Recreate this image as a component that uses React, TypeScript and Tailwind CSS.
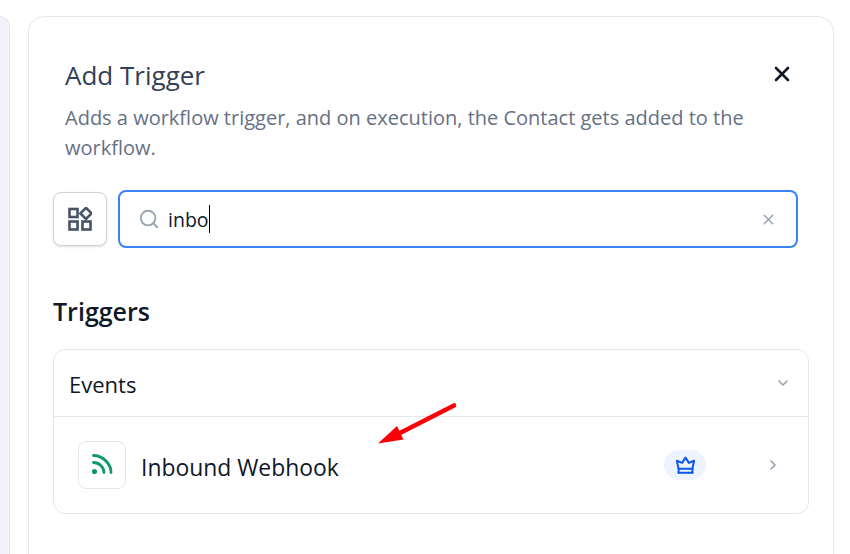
import { Search, X, ChevronDown, ChevronRight } from 'lucide-react';

function ElementsIcon() {
  return (
    <svg width="24" height="24" viewBox="0 0 24 24" fill="none" stroke="#475467" strokeWidth="2.6">
      <rect x="1.5" y="2" width="8" height="8" />
      <rect x="1.5" y="14.5" width="8" height="8" />
      <rect x="14.5" y="14.5" width="8" height="8" />
      <path d="M18 0.8L23.6 6.4L18 12L12.4 6.4Z" />
    </svg>
  );
}

function FeedIcon() {
  return (
    <svg width="24" height="24" viewBox="0 0 24 24" fill="none" stroke="#12996b" strokeWidth="2.8" strokeLinecap="round" className="-translate-y-[1px]">
      <path d="M3.5 3.5C12.5 3.5 21 11.5 21 20.5" />
      <path d="M3.5 10.5C9 10.5 14 15 14 20.5" />
      <circle cx="4.5" cy="19.5" r="2.6" fill="#12996b" stroke="none" />
    </svg>
  );
}

function CrownIcon() {
  return (
    <svg width="21" height="21" viewBox="0 0 20 20" fill="none" stroke="#0b57f0" strokeWidth="1.9" strokeLinejoin="round" strokeLinecap="round">
      <path d="M10 2.5L13.2 7.5L18.2 5.5L16.6 13H3.4L1.8 5.5L6.8 7.5Z" />
      <path d="M3.4 17H16.6" />
      <path d="M3.4 13V17M16.6 13V17" />
    </svg>
  );
}

export default function App() {
  return (
    <div className="relative flex h-[554px] w-[850px] overflow-hidden bg-white pt-4 font-['Open_Sans',sans-serif]">
      {/* Panel behind the drawer */}
      <div className="h-full w-[10px] rounded-tr-xl border-r border-t border-[#e4e7ec] bg-[#f2f4f9]" />

      {/* Drawer */}
      <div className="ml-[18px] h-[560px] w-[806px] rounded-t-2xl border border-[#e4e7ec] bg-white px-6">
        <div className="flex items-start justify-between pl-3 pr-[15px] pt-10">
          <h1 className="text-[26px] leading-9 text-[#344054]">Add Trigger</h1>
          <X size={24} strokeWidth={2.6} className="mt-[5px] text-[#101828]" />
        </div>
        <p className="mt-[10px] w-[700px] pl-3 text-[20px] leading-[30px] text-[#667085]">
          Adds a workflow trigger, and on execution, the Contact gets added to the workflow.
        </p>

        <div className="mt-[27px] flex items-center gap-[11px]">
          <div className="flex h-[54px] w-[54px] items-center justify-center rounded-lg border border-[#d0d5dd] bg-white shadow-sm">
            <ElementsIcon />
          </div>
          <div className="flex h-[58px] w-[680px] items-center rounded-lg border-2 border-[#3b82f6] pl-[18px] pr-[19px]">
            <Search size={22} className="text-[#98a2b3]" />
            <span className="ml-2 pt-[2px] text-[19.5px] leading-7 text-[#101828]">inbo</span>
            <span className="h-7 w-px bg-black" />
            <X size={17} className="ml-auto text-[#98a2b3]" />
          </div>
        </div>

        <h2 className="mt-[45px] text-[25px] font-semibold leading-9 text-[#101828]">Triggers</h2>

        <div className="mt-5 w-[756px] rounded-xl border border-[#e4e7ec]">
          <div className="flex h-[67px] items-center justify-between border-b border-[#e4e7ec] pl-[15px] pr-[17px]">
            <span className="pt-[2px] text-[22px] text-[#101828]">Events</span>
            <ChevronDown size={16} strokeWidth={2.5} className="text-[#98a2b3]" />
          </div>
          <div className="flex h-[96px] items-center pl-6 pr-[27px]">
            <div className="flex h-12 w-12 items-center justify-center rounded-lg border border-[#e4e7ec]">
              <FeedIcon />
            </div>
            <span className="ml-[15px] pt-[6px] text-[22.9px] text-[#101828]">Inbound Webhook</span>
            <div className="ml-auto flex h-[30px] w-[42px] items-center justify-center rounded-full bg-[#eef4ff]">
              <CrownIcon />
            </div>
            <ChevronRight size={16} strokeWidth={2.5} className="ml-[59px] text-[#98a2b3]" />
          </div>
        </div>
      </div>

      {/* Annotation arrow */}
      <svg className="absolute left-[370px] top-[395px]" width="95" height="55" viewBox="370 395 95 55" fill="none">
        <path d="M454 405.5L400 433" stroke="#fb0007" strokeWidth="4.6" strokeLinecap="round" />
        <path d="M378 443.5L397 426L403.5 439.5Z" fill="#fb0007" />
      </svg>
    </div>
  );
}
